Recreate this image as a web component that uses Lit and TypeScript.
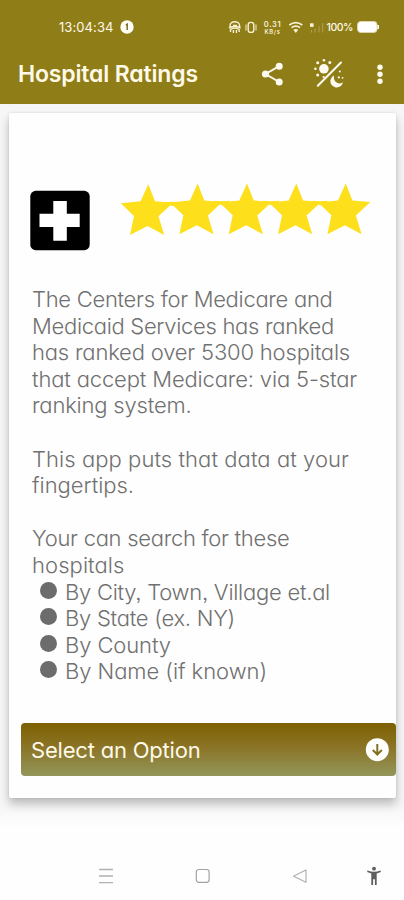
import { LitElement, html, svg, css } from "lit";
import { customElement } from "lit/decorators.js";

interface Line {
  text: string;
  width: number;
  bullet?: boolean;
}

const LINES: Line[] = [
  { text: "The Centers for Medicare and", width: 300.5 },
  { text: "Medicaid Services has ranked", width: 302 },
  { text: "has ranked over 5300 hospitals", width: 318 },
  { text: "that accept Medicare: via 5-star", width: 325 },
  { text: "ranking system.", width: 159.5 },
  { text: "", width: 0 },
  { text: "This app puts that data at your", width: 317 },
  { text: "fingertips.", width: 102 },
  { text: "", width: 0 },
  { text: "Your can search for these", width: 257.5 },
  { text: "hospitals", width: 92.5 },
  { text: "By City, Town, Village et.al", width: 265, bullet: true },
  { text: "By State (ex. NY)", width: 170, bullet: true },
  { text: "By County", width: 106, bullet: true },
  { text: "By Name (if known)", width: 202, bullet: true },
];

/** A run of text whose tracking is adjusted so that it spans a set width. */
@customElement("fit-text")
class FitText extends LitElement {
  static properties = { text: {}, width: { type: Number } };
  declare text: string;
  declare width: number;

  static styles = css`
    :host { display: inline-block; white-space: pre; }
  `;

  render() {
    return html`<span>${this.text}</span>`;
  }

  updated() {
    const span = this.renderRoot.querySelector("span") as HTMLElement;
    span.style.letterSpacing = "0px";
    const natural = span.getBoundingClientRect().width;
    if (this.text.length > 1) {
      span.style.letterSpacing = `${(this.width - natural) / this.text.length}px`;
    }
  }
}

@customElement("app-root")
class AppRoot extends LitElement {
  static styles = css`
    :host {
      display: flex;
      flex-direction: column;
      width: 404px;
      height: 900px;
      overflow: hidden;
      background: #fefefe;
      font-family: Inter, "Liberation Sans", sans-serif;
      font-feature-settings: "cv11", "ss03";
    }
    svg { display: block; flex: none; }
    header { height: 104px; background: #8f7d18; color: #fff9e8; flex: none; }
    .status {
      display: flex;
      align-items: center;
      height: 54px;
      padding-left: 59px;
      font-size: 13px;
    }
    .status .info { margin-left: 6px; }
    .status .signals { display: flex; margin-left: 94px; }
    .rate {
      display: flex;
      flex-direction: column;
      align-items: center;
      width: 18px;
      margin: 4px 6px 0 5px;
      font-weight: 600;
      line-height: 7px;
      color: #f8f1d4;
    }
    .rate .value { font-size: 7.5px; height: 7px; }
    .rate .unit { font-size: 5.8px; height: 7px; }
    .rate fit-text { display: block; }
    .percent { font-size: 10.5px; font-weight: 500; margin: 0 4px 0 3px; }
    .bar {
      display: flex;
      align-items: center;
      height: 40px;
      padding-left: 18px;
    }
    .title { font-size: 23px; font-weight: 600; line-height: 41px; }
    .bar .actions { margin-left: 62px; }
    main {
      display: flex;
      flex-direction: column;
      height: 731px;
      padding: 9px 8px 0 9px;
      box-sizing: border-box;
      background: linear-gradient(#f6f6f6, #f6f6f6 96%, #fefefe 99%);
      flex: none;
    }
    .card {
      height: 685px;
      border-radius: 2px;
      background: #fefefe;
      box-shadow: 0 6px 10px rgba(0, 0, 0, 0.24), 0 0 3px rgba(0, 0, 0, 0.1);
      display: flex;
      flex-direction: column;
    }
    .hero { display: flex; padding: 66px 0 0 20px; height: 106px; }
    .hero .cross { margin-top: 11px; }
    .hero .stars { margin-left: 29px; }
    .copy {
      padding-left: 23px;
      color: #707070;
      font-size: 22px;
      font-weight: 300;
      height: 438px;
    }
    .line { display: flex; height: 26.6px; line-height: 28.4px; }
    .bullet { margin: 4px 8px 0 8px; width: 17px; height: 17px; border-radius: 50%; background: #6c6c6c; }
    .select {
      display: flex;
      align-items: center;
      justify-content: space-between;
      height: 53px;
      box-sizing: border-box;
      margin-left: 12px;
      padding: 0 7px 0 10px;
      border: 0;
      border-radius: 4px;
      background: linear-gradient(#7d6000, #8b7426 45%, #92965a);
      color: #fff9e8;
      font: inherit;
      font-feature-settings: inherit;
      font-size: 22px;
      font-weight: 400;
      flex: none;
    }
    nav {
      display: flex;
      align-items: center;
      height: 48px;
      padding: 17px 21px 0 97px;
    }
    .home { margin-left: 79px; }
    .back { margin-left: 79px; }
    .access { margin-left: auto; }
  `;

  private statusIcons() {
    return html`
      <svg width="31" height="20" viewBox="228 17 31 20" fill="none" stroke="#f8f1d4" stroke-width="1.4">
        <path d="M230 27v-1.5a4.800 3.800 0 0 1 9.600 0V27M229 28.200q5.800-4 11.600 0M230.500 32v-2.500q4.300-3 8.600 0V32M233.400 33v-3M236.400 33v-3M233 25.500h4"/>
        <rect x="248.2" y="22.4" width="5.6" height="10" rx="2.4"/>
        <path d="M246 24.500v6M256 24.500v6" stroke-width="1"/>
      </svg>
      <div class="rate">
        <fit-text class="value" text="0.31" width="17.5"></fit-text>
        <fit-text class="unit" text="KB/s" width="16"></fit-text>
      </div>
      <svg width="36" height="20" viewBox="288 17 36 20" fill="none" stroke="#f8f1d4">
        <path d="M289.300 25q6.500-4.800 13 0M291.500 27.600q4.300-3 8.600 0" stroke-width="1.7"/>
        <path d="M293.300 29.700q2.500-1.500 5 0l-2.500 3.300z" fill="#f8f1d4" stroke="none"/>
        <rect x="310" y="23.3" width="3.6" height="3.6" fill="#f8f1d4" stroke="none"/>
        <path d="M311.500 30v2.500M315 28.500v4M319 26v6.500M322.700 23v9.500" stroke="#b0a055" stroke-width="1"/>
      </svg>`;
  }

  private actions() {
    return svg`<svg width="144" height="36" viewBox="260 55 144 36" fill="#fffaf0" stroke="none">
      <path d="M279.200 65.200L265.500 73l13.700 8" fill="none" stroke="#fffaf0" stroke-width="1.9"/>
      <circle cx="279.2" cy="65.3" r="3.5"/><circle cx="265.5" cy="73" r="3.6"/><circle cx="279.2" cy="81" r="3.5"/>
      <circle cx="323.9" cy="67.8" r="4.8"/>
      <circle cx="323.9" cy="59.2" r="1.3"/><circle cx="329.8" cy="61.6" r="1.5"/><circle cx="317.7" cy="61.8" r="1.5"/><circle cx="315.4" cy="67.8" r="1.3"/><circle cx="317.7" cy="74" r="1.5"/><circle cx="323.6" cy="76" r="1.1"/>
      <path d="M317.800 84.700L341 61.500" stroke="#fffaf0" stroke-width="2" stroke-linecap="round"/>
      <path d="M334.200 74.400a6.300 6.300 0 1 0 8.700 6.900q-4 2.600-7.300-.5-2.500-2.700-1.400-6.400z"/>
      <circle cx="339.8" cy="70.6" r="1"/><circle cx="338.8" cy="76.4" r="1.1"/><circle cx="342.6" cy="76.8" r=".9"/>
      <circle cx="380" cy="66.2" r="2.7"/><circle cx="380" cy="73.2" r="2.7"/><circle cx="380" cy="80.2" r="2.7"/>
    </svg>`;
  }

  private stars() {
    const star = "148.3,184.3 155,201.2 173,202.8 158.5,216.3 164.2,235 147.5,226 130,235 134,216 120.8,203.3 140.6,201.3";
    return svg`<svg class="stars" width="256" height="60" viewBox="120 179 256 60" fill="#fedf1c">
      ${[0, 1, 2, 3, 4].map(
        (i) => svg`<polygon points=${star} transform="translate(${i * 49.35} ${i ? -0.8 : 0})"/>`
      )}
      <path d="M164 202.200l9-.5 8 .5-9 4zM213 200.700l9 .6 9-.6-9.500 4.500zM262 200.700l9 .6 9-.6-9 4.500zM311 200.700l9 .6 9-.6-9 4.500z"/>
    </svg>`;
  }

  render() {
    return html`
      <header>
        <div class="status">
          <fit-text text="13:04:34" width="54.5"></fit-text>
          <svg class="info" width="14" height="14" viewBox="0 0 14 14"><circle cx="7" cy="7" r="6.7" fill="#fffdf5"/><path d="M5.800 5.200l1.400-1V10" fill="none" stroke="#75651a" stroke-width="1.4"/></svg>
          <div class="signals">${this.statusIcons()}</div>
          <div class="percent"><fit-text text="100%" width="26.5"></fit-text></div>
          <svg width="23" height="14" viewBox="0 0 23 14"><rect x=".5" y="1.5" width="19.6" height="11" rx="3.4" fill="#fff" stroke="#ded5ac"/><path d="M21 5q1.400 2 0 4z" fill="#fff" stroke="#fff"/></svg>
        </div>
        <div class="bar">
          <div class="title"><fit-text text="Hospital Ratings" width="180"></fit-text></div>
          <div class="actions">${this.actions()}</div>
        </div>
      </header>
      <main>
        <section class="card">
          <div class="hero">
            <svg class="cross" width="62" height="62" viewBox="29 190 62 62"><rect x="30.3" y="190.8" width="59.4" height="59.4" rx="5.5" fill="#000"/><path d="M53.300 201h13.500v12.700h12.900v13.200H66.800v13.800H53.300v-13.800H39.500v-13.200h13.800z" fill="#fff"/></svg>
            ${this.stars()}
          </div>
          <div class="copy">
            ${LINES.map(
              (l) => html`<div class="line">
                ${l.bullet ? html`<span class="bullet"></span>` : ""}
                ${l.text ? html`<fit-text .text=${l.text} .width=${l.width}></fit-text>` : ""}
              </div>`
            )}
          </div>
          <button class="select">
            <fit-text text="Select an Option" width="169.5"></fit-text>
            <svg width="24" height="24" viewBox="0 0 24 24"><circle cx="12.3" cy="11.7" r="11.5" fill="#fff"/><path d="M12.300 6v10.500M7.800 12l4.500 4.500 4.500-4.500" fill="none" stroke="#807020" stroke-width="2"/></svg>
          </button>
        </section>
      </main>
      <nav>
        <svg width="18" height="18" viewBox="0 0 18 18" stroke="#b1b1b1" stroke-width="1.3"><path d="M2 2.500h14M2 9h14M2 15.700h14"/></svg>
        <svg class="home" width="18" height="18" viewBox="0 0 18 18" fill="none" stroke="#a3a3a3" stroke-width="1.2"><rect x="2.3" y="2.5" width="12.8" height="12.8" rx="2.5"/></svg>
        <svg class="back" width="18" height="18" viewBox="0 0 18 18" fill="none" stroke="#b1b1b1" stroke-width="1.2"><path d="M15 3v12.300L2.500 9.200z" stroke-linejoin="round"/></svg>
        <svg class="access" width="18" height="20" viewBox="0 0 18 20" fill="#5e5e5e"><circle cx="9" cy="2.7" r="1.9"/><path d="M2.500 4.600Q9 7 15.500 4.600l.4 1.500-4.200 1.300V19H9.900v-5.800H8.100V19H6.300V7.400L2.100 6.100z"/></svg>
      </nav>
    `;
  }
}
